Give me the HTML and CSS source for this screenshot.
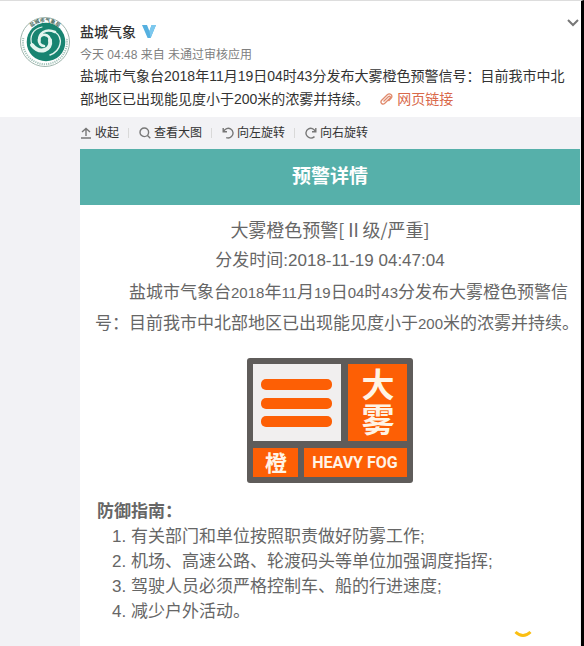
FILE: index.html
```html
<!DOCTYPE html>
<html lang="zh-CN">
<head>
<meta charset="UTF-8" />
<meta name="viewport" content="width=device-width, initial-scale=1" />
<title>盐城气象</title>
<link rel="stylesheet" href="styles.css">
</head>
<body>
<article class="feed">
  <header class="post">
    <svg class="avatar" viewBox="0 0 50 50" role="img" aria-label="盐城市气象局">
      <defs>
        <path id="ring" d="M5 25 A20 20 0 0 1 45 25" />
      </defs>
      <circle cx="25" cy="25" r="24.5" fill="#fff" stroke="#9fb5ad" stroke-width="1" />
      <path d="M3.4 21 A22 22 0 1 0 46.6 21" fill="none" stroke="#a5c4bb" stroke-width="2" stroke-dasharray="1.2 1" />
      <circle cx="26" cy="25" r="19.3" fill="#188471" />
      <text class="avatar-text"><textPath href="#ring" startOffset="50%" text-anchor="middle">盐城市气象局</textPath></text>
      <g fill="none" stroke="#e4f5ef" stroke-linecap="round">
        <path d="M30 24 A5.6 5.6 0 1 0 24 29" stroke-width="2.6" />
        <path d="M30 23 C32 33 20 38 12 28" stroke-width="4" />
        <path d="M19.5 24 C18 16 26 11 35 15" stroke-width="2.6" />
        <path d="M35 15 C44 21 41 34 30 38" stroke-width="1.4" />
        <path d="M12 28 C9 19 13 12 22 10" stroke-width="1.2" />
      </g>
    </svg>
    <div class="post-main">
      <div class="name-row">
        <a class="name" href="#">盐城气象</a>
        <svg class="verified" viewBox="0 0 14 13" aria-hidden="true">
          <path d="M0 0 H5 L7.4 6 L9.6 0 H14 L8.6 13 H5.6 Z" fill="#55b0e0" />
          <path d="M9.6 0 H14 L8.6 13 L7.4 6 Z" fill="#7cc8ee" />
        </svg>
      </div>
      <p class="meta">今天 04:48 来自 未通过审核应用</p>
      <p class="post-text">盐城市气象台2018年11月19日04时43分发布大雾橙色预警信号：目前我市中北部地区已出现能见度小于200米的浓雾并持续。 <a class="link" href="#"><svg class="link-icon" viewBox="0 0 14 14" aria-hidden="true"><path d="M4.5 9.5 L9.3 4.7 C10.7 3.5 12 5 10.9 6.2 L5.8 11.3 C3.6 13.4 .6 10.6 2.7 8.3 L8.3 2.7 C10.8 .5 14.2 3.4 12.2 6.2 L9.5 9" /></svg>网页链接</a></p>
    </div>
    <button class="more" type="button" aria-label="更多">
      <svg viewBox="0 0 12 8"><path d="M1 1 L6 6 L11 1" /></svg>
    </button>
  </header>

  <section class="media">
    <nav class="toolbar">
      <button type="button"><svg viewBox="0 0 12 12"><path d="M1 11 H11 M6 9 V1.5 M2 5 L6 1.5 L10 5" /></svg>收起</button>
      <button type="button"><svg viewBox="0 0 12 12"><circle cx="5.3" cy="5.3" r="4.3" /><path d="M8.5 8.5 L11.3 11.3" /></svg>查看大图</button>
      <button type="button"><svg viewBox="0 0 12 12"><path d="M1.2 1 V4.8 H5 M1.6 4.5 C3 1.5 6 .6 8.5 1.8 C11.5 3.4 11.8 7.5 9.5 9.6 C8 11 6 11.3 4.2 10.6" /></svg>向左旋转</button>
      <button type="button"><svg viewBox="0 0 12 12"><path d="M10.8 1 V4.8 H7 M10.4 4.5 C9 1.5 6 .6 3.5 1.8 C.5 3.4 .2 7.5 2.5 9.6 C4.5 11.4 7.5 11.3 9.5 9.6" /></svg>向右旋转</button>
    </nav>

    <div class="notice">
      <h1 class="notice-bar">预警详情</h1>
      <h2 class="notice-title">大雾橙色预警[Ⅱ级/严重]</h2>
      <p class="notice-time">分发时间:2018-11-19 04:47:04</p>
      <p class="notice-text">盐城市气象台<span class="num">2018</span>年<span class="num">11</span>月<span class="num">19</span>日<span class="num">04</span>时<span class="num">43</span>分发布大雾橙色预警信号：目前我市中北部地区已出现能见度小于<span class="num">200</span>米的浓雾并持续。</p>

      <svg class="sign" viewBox="0 0 166 125" role="img" aria-label="大雾橙色预警">
        <rect width="166" height="125" rx="3" fill="#5f5c5a" />
        <rect x="6" y="6" width="88" height="77" fill="#f1efef" />
        <g fill="#fd5f05">
          <rect x="101" y="6" width="59" height="77" />
          <rect x="6" y="90" width="45" height="29" />
          <rect x="57" y="90" width="103" height="29" />
          <rect x="14" y="21" width="71" height="11" rx="5" />
          <rect x="14" y="40" width="71" height="11" rx="5" />
          <rect x="14" y="58" width="71" height="11" rx="5" />
        </g>
        <text class="sign-big" x="131" y="39">大</text>
        <text class="sign-big" x="131" y="74">雾</text>
        <text class="sign-level" x="29" y="113">橙</text>
        <text class="sign-en" x="108" y="110">HEAVY FOG</text>
      </svg>

      <h3 class="guide-title">防御指南：</h3>
      <ol class="guide">
        <li>有关部门和单位按照职责做好防雾工作;</li>
        <li>机场、高速公路、轮渡码头等单位加强调度指挥;</li>
        <li>驾驶人员必须严格控制车、船的行进速度;</li>
        <li>减少户外活动。</li>
      </ol>
      <svg class="smile" viewBox="0 0 18 8" aria-hidden="true"><path d="M1.5 2 Q9 9 16.5 2" /></svg>
    </div>
  </section>
</article>
</body>
</html>
```

FILE: styles.css
```css
* {
  box-sizing: border-box;
}
body {
  margin: 0;
  font-family: "Liberation Sans", "Noto Sans CJK SC", sans-serif;
  color: #333;
  background: #f2f2f5;
}
h1, h2, h3, p, ol {
  margin: 0;
  padding: 0;
}
a {
  text-decoration: none;
}
button {
  border: 0;
  padding: 0;
  background: none;
  font-family: inherit;
}
.feed {
  min-height: 100vh;
  border-top: 1px solid #ddd;
  border-right: 3px solid #000;
  overflow: hidden;
}

/* Post */
.post {
  position: relative;
  display: flex;
  gap: 10px;
  padding: 16px 10px 6px 20px;
  background: #fff;
}
.avatar {
  flex: none;
  width: 50px;
  height: 50px;
}
.avatar-text {
  font-size: 5px;
  font-weight: 700;
  fill: #41665b;
}
.post-main {
  flex: 1;
}
.name-row {
  display: flex;
  align-items: center;
  gap: 6px;
  height: 28px;
}
.name {
  font-size: 14px;
  font-weight: 500;
  color: #333;
}
.verified {
  width: 14px;
  height: 13px;
}
.meta {
  font-size: 12px;
  line-height: 20px;
  color: #808080;
}
.post-text {
  font-size: 14px;
  line-height: 23px;
}
.link {
  margin-left: 6px;
  color: #d9694a;
}
.link-icon {
  width: 14px;
  height: 14px;
  margin-right: 4px;
  vertical-align: -2px;
  fill: none;
  stroke: #e08a6c;
  stroke-width: 1.3;
}
.more {
  position: absolute;
  top: 18px;
  right: 2px;
  line-height: 0;
}
.more svg {
  width: 12px;
  height: 8px;
  fill: none;
  stroke: #777;
  stroke-width: 2;
}

/* Toolbar */
.media {
  padding: 0 1px 0 80px;
}
.toolbar {
  display: flex;
  align-items: center;
  height: 32px;
}
.toolbar button {
  display: flex;
  align-items: center;
  gap: 3px;
  font-size: 12px;
  line-height: 16px;
  color: #333;
}
.toolbar button + button {
  margin-left: 9px;
  padding-left: 11px;
  background: linear-gradient(#d9d9d9, #d9d9d9) left center / 1px 10px no-repeat;
}
.toolbar svg {
  width: 12px;
  height: 12px;
  fill: none;
  stroke: #777;
  stroke-width: 1.4;
}

/* Warning notice */
.notice {
  position: relative;
  min-height: calc(100vh - 149px);
  background: #fff;
  color: #666;
}
.notice-bar {
  background: #56b0aa;
  color: #fff;
  font-size: 19px;
  font-weight: 700;
  line-height: 56px;
  text-align: center;
}
.notice-title {
  padding-top: 8px;
  font-family: "Noto Sans CJK SC", sans-serif;
  font-size: 18px;
  font-weight: 400;
  line-height: 32px;
  text-align: center;
}
.notice-time {
  font-size: 17px;
  line-height: 32px;
  text-align: center;
}
.notice-text {
  padding-left: 15px;
  font-size: 17px;
  line-height: 31px;
  text-indent: 34px;
}
.num {
  font-size: 15px;
}
.sign {
  display: block;
  width: 166px;
  height: 125px;
  margin: 19px auto 0;
}
.sign text {
  fill: #fff4e6;
  text-anchor: middle;
  font-weight: 700;
}
.sign-big {
  font-size: 33px;
}
.sign-level {
  font-size: 22px;
}
.sign-en {
  font-family: Roboto, "Liberation Sans", sans-serif;
  font-size: 16px;
}
.guide-title {
  margin-top: 16px;
  padding-left: 17px;
  font-size: 17px;
  font-weight: 700;
  line-height: 25px;
}
.guide {
  padding-left: 51px;
  font-size: 17px;
  line-height: 25px;
}
.smile {
  position: absolute;
  right: 48px;
  bottom: 8px;
  width: 18px;
  height: 8px;
  fill: none;
  stroke: #fbbf12;
  stroke-width: 3;
}
```
